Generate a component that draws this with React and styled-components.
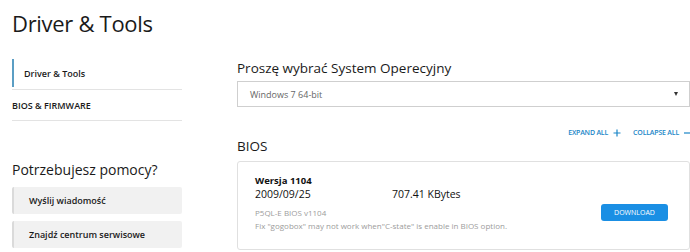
import React from 'react';
import styled, { createGlobalStyle } from 'styled-components';

const GlobalStyle = createGlobalStyle`
  body {
    margin: 0;
    background: #fff;
    font-family: "Open Sans", "Noto Sans", sans-serif;
    color: #1a1a1a;
  }
`;

const Page = styled.div`
  width: 690px;
  height: 252px;
  overflow: hidden;
  padding-left: 12px;
  box-sizing: border-box;
`;

const Title = styled.h1`
  margin: 0;
  padding-top: 7px;
  font-size: 22px;
  font-weight: 400;
  line-height: 32px;
  letter-spacing: -0.3px;
  color: #1a1a1a;
`;

const Columns = styled.div`
  display: grid;
  grid-template-columns: 170px 1fr;
  column-gap: 55px;
  margin-top: 20px;
`;

const Sidebar = styled.aside`
  display: flex;
  flex-direction: column;
`;

const NavItem = styled.div`
  border-bottom: 1px solid #e3e3e3;
  padding-bottom: ${(p) => (p.$active ? '2px' : '0')};
`;

const NavLabel = styled.div`
  height: ${(p) => (p.$active ? '28px' : '30px')};
  display: flex;
  align-items: center;
  padding-left: ${(p) => (p.$active ? '10px' : '0')};
  border-left: ${(p) => (p.$active ? '2px solid #5b9ec4' : 'none')};
  font-size: 9px;
  font-weight: 600;
  color: #1a1a1a;
`;

const HelpTitle = styled.h2`
  margin: 39px 0 0;
  font-size: 14px;
  font-weight: 400;
  line-height: 20px;
  white-space: nowrap;
  color: #1a1a1a;
`;

const HelpButtons = styled.div`
  display: flex;
  flex-direction: column;
  gap: 7px;
  margin-top: 7px;
`;

const HelpButton = styled.div`
  height: 27px;
  display: flex;
  align-items: center;
  padding-left: 15px;
  background: #f1f1f1;
  border-left: 2px solid #dadada;
  border-radius: 2px;
  font-size: 9px;
  font-weight: 600;
  color: #1a1a1a;
`;

const Main = styled.main`
  display: flex;
  flex-direction: column;
`;

const SectionLabel = styled.h3`
  margin: 0;
  font-size: 13.5px;
  font-weight: 400;
  line-height: 18px;
  color: #1a1a1a;
`;

const Select = styled.div`
  margin-top: 4px;
  height: 26px;
  box-sizing: border-box;
  border: 1px solid #cfcfcf;
  display: flex;
  align-items: center;
  justify-content: space-between;
  padding: 0 11px 0 12px;
  font-size: 9px;
  color: #666;
`;

const Caret = styled.span`
  width: 0;
  height: 0;
  border-left: 2.5px solid transparent;
  border-right: 2.5px solid transparent;
  border-top: 4px solid #333;
`;

const ToolsRow = styled.div`
  display: flex;
  justify-content: flex-end;
  gap: 12px;
  margin-top: 21px;
  height: 10px;
`;

const ToolLink = styled.span`
  display: flex;
  align-items: center;
  gap: 5px;
  font-size: 7px;
  font-weight: 600;
  letter-spacing: -0.2px;
  color: #1b86c7;
  line-height: 10px;
`;

const BiosTitle = styled(SectionLabel)`
  margin-top: -1px;
`;

const Card = styled.div`
  margin-top: 6px;
  border: 1px solid #e0e0e0;
  border-radius: 3px;
  height: 89px;
  box-sizing: border-box;
  padding: 13px 21px 0 17px;
  display: flex;
  align-items: flex-start;
  justify-content: space-between;
`;

const Info = styled.div`
  display: flex;
  flex-direction: column;
`;

const Version = styled.div`
  font-size: 9.5px;
  font-weight: 700;
  line-height: 12px;
  color: #111;
`;

const Meta = styled.div`
  display: flex;
  font-size: 10.5px;
  line-height: 14px;
  color: #111;
`;

const MetaCell = styled.span`
  width: ${(p) => p.$w || 'auto'};
`;

const Desc = styled.div`
  margin-top: 5px;
  font-size: 8px;
  line-height: 13px;
  color: #9c9c9c;
`;

const DownloadButton = styled.button`
  margin-top: 29px;
  width: 67px;
  height: 17px;
  border: none;
  border-radius: 3px;
  background: #1a8fe4;
  color: #fff;
  font-family: inherit;
  font-size: 7px;
  font-weight: 500;
  padding: 0;
`;

function PlusIcon() {
  return (
    <svg width="8" height="8" viewBox="0 0 8 8">
      <path d="M4 0.5v7M0.5 4h7" stroke="#1b86c7" strokeWidth="1.2" />
    </svg>
  );
}

function MinusIcon() {
  return (
    <svg width="6" height="8" viewBox="0 0 6 8">
      <path d="M0 4h6" stroke="#1b86c7" strokeWidth="1.2" />
    </svg>
  );
}

export default function App() {
  return (
    <>
      <GlobalStyle />
      <Page>
        <Title>Driver &amp; Tools</Title>
        <Columns>
          <Sidebar>
            <NavItem $active>
              <NavLabel $active>Driver &amp; Tools</NavLabel>
            </NavItem>
            <NavItem>
              <NavLabel>BIOS &amp; FIRMWARE</NavLabel>
            </NavItem>
            <HelpTitle>Potrzebujesz pomocy?</HelpTitle>
            <HelpButtons>
              <HelpButton>Wyślij wiadomość</HelpButton>
              <HelpButton>Znajdź centrum serwisowe</HelpButton>
            </HelpButtons>
          </Sidebar>
          <Main>
            <SectionLabel>Proszę wybrać System Operecyjny</SectionLabel>
            <Select>
              <span>Windows 7 64-bit</span>
              <Caret />
            </Select>
            <ToolsRow>
              <ToolLink>EXPAND ALL <PlusIcon /></ToolLink>
              <ToolLink>COLLAPSE ALL <MinusIcon /></ToolLink>
            </ToolsRow>
            <BiosTitle>BIOS</BiosTitle>
            <Card>
              <Info>
                <Version>Wersja 1104</Version>
                <Meta>
                  <MetaCell $w="137px">2009/09/25</MetaCell>
                  <MetaCell>707.41 KBytes</MetaCell>
                </Meta>
                <Desc>
                  P5QL-E BIOS v1104
                  <br />
                  Fix "gogobox" may not work when"C-state" is enable in BIOS option.
                </Desc>
              </Info>
              <DownloadButton>DOWNLOAD</DownloadButton>
            </Card>
          </Main>
        </Columns>
      </Page>
    </>
  );
}
